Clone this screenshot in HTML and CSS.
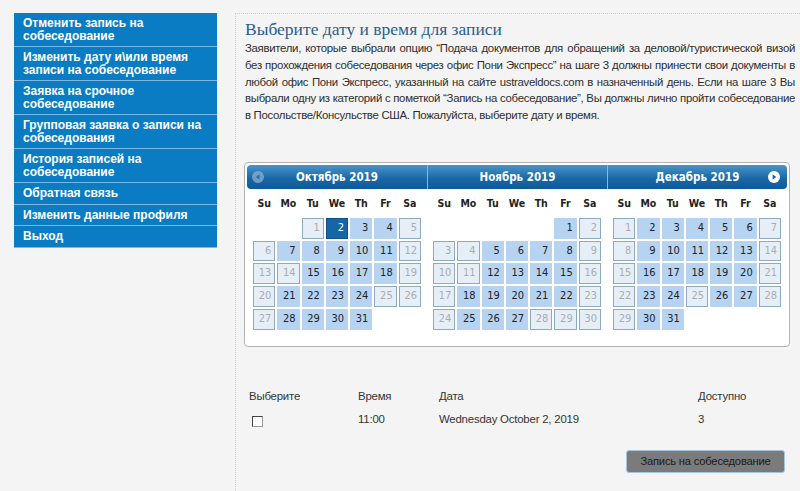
FILE: index.html
```html
<!DOCTYPE html>
<html lang="ru">
<head>
<meta charset="utf-8">
<title>Выберите дату и время для записи</title>
<link rel="stylesheet" href="styles.css">
</head>
<body>
<div class="page">
  <nav class="sidebar">
    <a class="nav-item" href="#">Отменить запись на<br>собеседование</a>
    <a class="nav-item" href="#">Изменить дату и\или время<br>записи на собеседование</a>
    <a class="nav-item" href="#">Заявка на срочное<br>собеседование</a>
    <a class="nav-item" href="#">Групповая заявка о записи на<br>собеседования</a>
    <a class="nav-item" href="#">История записей на<br>собеседование</a>
    <a class="nav-item" href="#">Обратная связь</a>
    <a class="nav-item" href="#">Изменить данные профиля</a>
    <a class="nav-item" href="#">Выход</a>
  </nav>
  <main class="main">
    <h1 class="title">Выберите дату и время для записи</h1>
    <p class="intro">
      <span class="ln">Заявители, которые выбрали опцию “Подача документов для обращений за деловой/туристической визой</span>
      <span class="ln">без прохождения собеседования через офис Пони Экспресс” на шаге 3 должны принести свои документы в</span>
      <span class="ln">любой офис Пони Экспресс, указанный на сайте ustraveldocs.com в назначенный день. Если на шаге 3 Вы</span>
      <span class="ln">выбрали одну из категорий с пометкой “Запись на собеседование”, Вы должны лично пройти собеседование</span>
      <span class="ln last">в Посольстве/Консульстве США. Пожалуйста, выберите дату и время.</span>
    </p>

    <div class="calendar">
      <div class="month">
        <div class="month-head first">
          <svg class="nav-icon prev" width="12" height="12" viewBox="0 0 12 12"><circle cx="6" cy="6" r="6" fill="#7ea8cc"/><path d="M7.5 3.2 L3.8 6 L7.5 8.8 Z" fill="#2f6fa6"/></svg>
          <span>Октябрь 2019</span>
        </div>
        <table class="days">
          <thead><tr><th>Su</th><th>Mo</th><th>Tu</th><th>We</th><th>Th</th><th>Fr</th><th>Sa</th></tr></thead>
          <tbody>
            <tr><td></td><td></td><td><span class="d x">1</span></td><td><span class="d s">2</span></td><td><span class="d a">3</span></td><td><span class="d a">4</span></td><td><span class="d x">5</span></td></tr>
            <tr><td><span class="d x">6</span></td><td><span class="d a">7</span></td><td><span class="d a">8</span></td><td><span class="d a">9</span></td><td><span class="d a">10</span></td><td><span class="d a">11</span></td><td><span class="d x">12</span></td></tr>
            <tr><td><span class="d x">13</span></td><td><span class="d x">14</span></td><td><span class="d a">15</span></td><td><span class="d a">16</span></td><td><span class="d a">17</span></td><td><span class="d a">18</span></td><td><span class="d x">19</span></td></tr>
            <tr><td><span class="d x">20</span></td><td><span class="d a">21</span></td><td><span class="d a">22</span></td><td><span class="d a">23</span></td><td><span class="d a">24</span></td><td><span class="d x">25</span></td><td><span class="d x">26</span></td></tr>
            <tr><td><span class="d x">27</span></td><td><span class="d a">28</span></td><td><span class="d a">29</span></td><td><span class="d a">30</span></td><td><span class="d a">31</span></td><td></td><td></td></tr>
          </tbody>
        </table>
      </div>
      <div class="month">
        <div class="month-head mid"><span>Ноябрь 2019</span></div>
        <table class="days">
          <thead><tr><th>Su</th><th>Mo</th><th>Tu</th><th>We</th><th>Th</th><th>Fr</th><th>Sa</th></tr></thead>
          <tbody>
            <tr><td></td><td></td><td></td><td></td><td></td><td><span class="d a">1</span></td><td><span class="d x">2</span></td></tr>
            <tr><td><span class="d x">3</span></td><td><span class="d x">4</span></td><td><span class="d a">5</span></td><td><span class="d a">6</span></td><td><span class="d a">7</span></td><td><span class="d a">8</span></td><td><span class="d x">9</span></td></tr>
            <tr><td><span class="d x">10</span></td><td><span class="d x">11</span></td><td><span class="d a">12</span></td><td><span class="d a">13</span></td><td><span class="d a">14</span></td><td><span class="d a">15</span></td><td><span class="d x">16</span></td></tr>
            <tr><td><span class="d x">17</span></td><td><span class="d a">18</span></td><td><span class="d a">19</span></td><td><span class="d a">20</span></td><td><span class="d a">21</span></td><td><span class="d a">22</span></td><td><span class="d x">23</span></td></tr>
            <tr><td><span class="d x">24</span></td><td><span class="d a">25</span></td><td><span class="d a">26</span></td><td><span class="d a">27</span></td><td><span class="d x">28</span></td><td><span class="d x">29</span></td><td><span class="d x">30</span></td></tr>
          </tbody>
        </table>
      </div>
      <div class="month">
        <div class="month-head last">
          <span>Декабрь 2019</span>
          <svg class="nav-icon next" width="12" height="12" viewBox="0 0 12 12"><circle cx="6" cy="6" r="6" fill="#ffffff"/><path d="M4.6 3.2 L8.3 6 L4.6 8.8 Z" fill="#1565a3"/></svg>
        </div>
        <table class="days">
          <thead><tr><th>Su</th><th>Mo</th><th>Tu</th><th>We</th><th>Th</th><th>Fr</th><th>Sa</th></tr></thead>
          <tbody>
            <tr><td><span class="d x">1</span></td><td><span class="d a">2</span></td><td><span class="d a">3</span></td><td><span class="d a">4</span></td><td><span class="d a">5</span></td><td><span class="d a">6</span></td><td><span class="d x">7</span></td></tr>
            <tr><td><span class="d x">8</span></td><td><span class="d a">9</span></td><td><span class="d a">10</span></td><td><span class="d a">11</span></td><td><span class="d a">12</span></td><td><span class="d a">13</span></td><td><span class="d x">14</span></td></tr>
            <tr><td><span class="d x">15</span></td><td><span class="d a">16</span></td><td><span class="d a">17</span></td><td><span class="d a">18</span></td><td><span class="d a">19</span></td><td><span class="d a">20</span></td><td><span class="d x">21</span></td></tr>
            <tr><td><span class="d x">22</span></td><td><span class="d a">23</span></td><td><span class="d a">24</span></td><td><span class="d x">25</span></td><td><span class="d a">26</span></td><td><span class="d a">27</span></td><td><span class="d x">28</span></td></tr>
            <tr><td><span class="d x">29</span></td><td><span class="d a">30</span></td><td><span class="d a">31</span></td><td></td><td></td><td></td><td></td></tr>
          </tbody>
        </table>
      </div>
    </div>

    <div class="slots">
      <div class="sh">Выберите</div>
      <div class="sh">Время</div>
      <div class="sh">Дата</div>
      <div class="sh">Доступно</div>
      <div class="sc"><input class="check" type="checkbox" aria-label="Выберите"></div>
      <div class="sc">11:00</div>
      <div class="sc">Wednesday October 2, 2019</div>
      <div class="sc">3</div>
    </div>

    <div class="actions">
      <button class="btn" type="button">Запись на собеседование</button>
    </div>
  </main>
</div>
</body>
</html>
```

FILE: styles.css
```css
html, body {
  margin: 0;
  padding: 0;
}

body {
  background: #f4f4f4;
  font-family: "Liberation Sans", Arial, sans-serif;
  font-size: 12px;
  color: #333;
}

.page {
  display: flex;
  align-items: stretch;
  height: 491px;
  box-sizing: border-box;
  padding: 13px 0 0 14px;
  overflow: hidden;
}

/* Sidebar */
.sidebar {
  width: 203px;
  flex: none;
  display: flex;
  flex-direction: column;
  align-self: flex-start;
}

.nav-item {
  display: block;
  background: #0a7cc4;
  color: #fff;
  font-weight: bold;
  font-size: 12px;
  line-height: 12.5px;
  padding: 4px 9px;
  border-bottom: 1px solid #7bb7e1;
  text-decoration: none;
}

/* Main */
.main {
  flex: 1;
  margin-left: 18px;
  border-top: 1px dotted #cdcdcd;
  border-left: 1px dotted #cdcdcd;
  padding: 4px 5px 0 9px;
  min-width: 0;
}

.title {
  margin: 0;
  font-family: "Liberation Serif", "Times New Roman", serif;
  font-weight: normal;
  font-size: 17.5px;
  line-height: 22px;
  color: #2c5e8c;
}

.intro {
  margin: 0;
  line-height: 16.8px;
  font-size: 11.4px;
  letter-spacing: -0.3px;
  color: #2e2e2e;
}

.ln {
  display: block;
  text-align: justify;
  text-align-last: justify;
}

.ln.last {
  text-align-last: left;
}

/* Calendar */
.calendar {
  display: flex;
  margin: 38px 5px 0 -1px;
  padding: 2px 2px 0;
  background: #fff;
  border: 1px solid #b3b3b3;
  border-radius: 4px;
  font-family: "DejaVu Sans Condensed", "DejaVu Sans", sans-serif;
  font-stretch: condensed;
}

.month {
  flex: 1;
  min-width: 0;
}

.month-head {
  position: relative;
  height: 24px;
  display: flex;
  align-items: center;
  justify-content: center;
  background: linear-gradient(#4a94cb, #1a69a6 55%, #0c5a96);
  color: #fff;
  font-weight: bold;
  font-size: 11.5px;
}

.month-head.first {
  border-radius: 4px 0 0 4px;
}

.month-head.mid,
.month-head.last {
  border-left: 1px solid #8ab7dc;
}

.month-head.last {
  border-radius: 0 4px 4px 0;
}

.nav-icon {
  position: absolute;
  top: 6px;
}

.nav-icon.prev {
  left: 5px;
  opacity: 0.85;
}

.nav-icon.next {
  right: 7px;
}

.days {
  width: 170px;
  margin: 0 5px 15px;
  border-collapse: collapse;
  table-layout: fixed;
}

.days th {
  height: 28px;
  padding: 0;
  font-size: 10.5px;
  font-weight: bold;
  color: #222;
  text-align: center;
}

.days td {
  padding: 1px;
}

.d {
  display: block;
  border: 1px solid transparent;
  padding: 0 3px;
  line-height: 18.75px;
  text-align: right;
  font-size: 11px;
}

.d.a {
  background: #b6d4f2;
  border-color: #b6d4f2;
  color: #222;
}

.d.x {
  background: #e6eff8;
  border-color: #8eabbd;
  color: #acacac;
}

.d.s {
  background: #1566a6;
  border-color: #0e5189;
  color: #fff;
}

/* Slots */
.slots {
  display: grid;
  grid-template-columns: 109px 81px 259px 1fr;
  row-gap: 5px;
  margin: 40px 0 0 4px;
  line-height: 18px;
  font-size: 11.4px;
  letter-spacing: -0.2px;
  color: #333;
}

.check {
  appearance: none;
  -webkit-appearance: none;
  display: block;
  width: 11px;
  height: 11px;
  margin: 6px 0 0 3px;
  background: #fff;
  border: 1px solid #444;
  border-right-color: #999;
  border-bottom-color: #999;
  box-sizing: border-box;
}

.actions {
  display: flex;
  justify-content: flex-end;
  margin: 22px 10px 0 0;
}

.btn {
  width: 159px;
  height: 23px;
  padding: 0;
  background: #7b7b7b;
  border: 1px solid #a8c5df;
  border-radius: 3px;
  font-family: "Liberation Sans", Arial, sans-serif;
  font-size: 11.2px;
  letter-spacing: -0.2px;
  color: #1a1a1a;
}
```
